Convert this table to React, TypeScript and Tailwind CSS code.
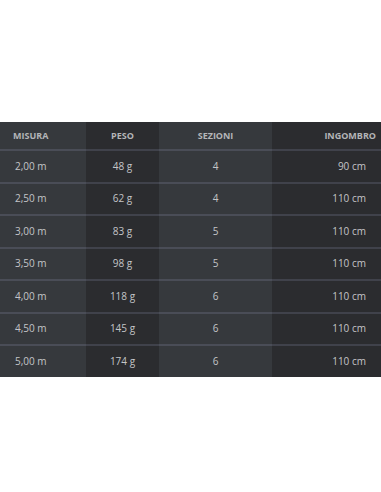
const rows = [
  { misura: '2,00 m', peso: '48 g', sezioni: '4', ingombro: '90 cm' },
  { misura: '2,50 m', peso: '62 g', sezioni: '4', ingombro: '110 cm' },
  { misura: '3,00 m', peso: '83 g', sezioni: '5', ingombro: '110 cm' },
  { misura: '3,50 m', peso: '98 g', sezioni: '5', ingombro: '110 cm' },
  { misura: '4,00 m', peso: '118 g', sezioni: '6', ingombro: '110 cm' },
  { misura: '4,50 m', peso: '145 g', sezioni: '6', ingombro: '110 cm' },
  { misura: '5,00 m', peso: '174 g', sezioni: '6', ingombro: '110 cm' },
];

const grid = 'grid grid-cols-[86px_73px_113px_1fr]';

export default function App() {
  return (
    <div className="w-[381px] h-[492px] bg-white" style={{ fontFamily: '"Open Sans", "Liberation Sans", sans-serif' }}>
      <div className="h-[122px]" />
      <div className="w-full">
        <div className={`${grid} h-[27px] text-[9px] font-bold text-[#b4b5b8] uppercase`}>
          <div className="bg-[#36393d] flex items-center pl-[13px]">Misura</div>
          <div className="bg-[#2b2c2f] flex items-center justify-center">Peso</div>
          <div className="bg-[#36393d] flex items-center justify-center">Sezioni</div>
          <div className="bg-[#2b2c2f] flex items-center justify-end pr-[5px]">Ingombro</div>
        </div>
        {rows.map((r) => (
          <div key={r.misura} className={`${grid} h-[32.5px] text-[10px] text-[#c4c5c8]`}>
            <div className="bg-[#36393d] border-t-2 border-[#4a4d57] flex items-center pl-[15px]">{r.misura}</div>
            <div className="bg-[#2b2c2f] border-t-2 border-[#40424b] flex items-center justify-center">{r.peso}</div>
            <div className="bg-[#36393d] border-t-2 border-[#4a4d57] flex items-center justify-center">{r.sezioni}</div>
            <div className="bg-[#2b2c2f] border-t-2 border-[#40424b] flex items-center justify-end pr-[15px]">{r.ingombro}</div>
          </div>
        ))}
      </div>
    </div>
  );
}
